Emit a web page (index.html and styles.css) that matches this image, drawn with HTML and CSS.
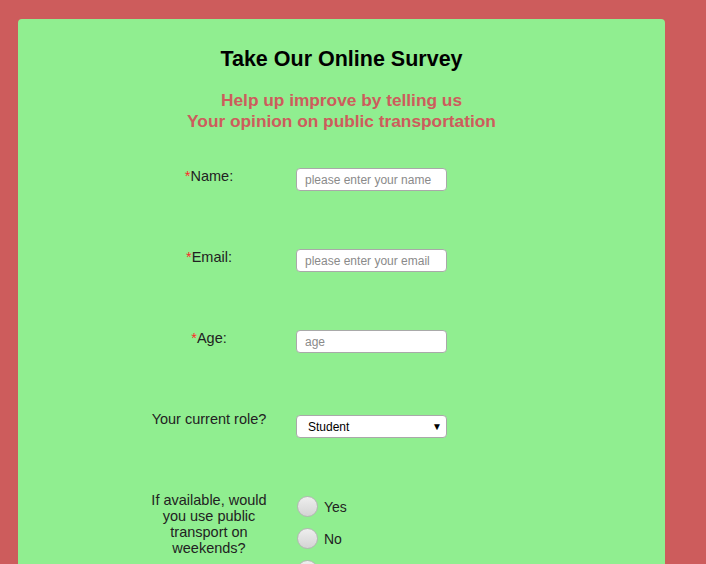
FILE: index.html
```html
<!DOCTYPE html>
<html>
<head>
<meta charset="utf-8">
<link rel="stylesheet" href="styles.css">
</head>
<body>
<div class="card">
  <h1 class="title">Take Our Online Survey</h1>
  <p class="subtitle">Help up improve by telling us<br>Your opinion on public transportation</p>
  <form class="form">
    <div class="row">
      <label class="lbl"><span class="req">*</span>Name:</label>
      <div class="field"><input class="inp" type="text" placeholder="please enter your name"></div>
    </div>
    <div class="row">
      <label class="lbl"><span class="req">*</span>Email:</label>
      <div class="field"><input class="inp" type="email" placeholder="please enter your email"></div>
    </div>
    <div class="row">
      <label class="lbl"><span class="req">*</span>Age:</label>
      <div class="field"><input class="inp" type="number" placeholder="age"></div>
    </div>
    <div class="row">
      <label class="lbl">Your current role?</label>
      <div class="field field-sel">
        <div class="sel"><span>Student</span><span class="arrow">&#9660;</span></div>
      </div>
    </div>
    <div class="row row-radio">
      <label class="lbl lbl-multi">If available, would you use public transport on weekends?</label>
      <div class="field radios">
        <label class="opt"><span class="radio"></span>Yes</label>
        <label class="opt"><span class="radio"></span>No</label>
        <label class="opt"><span class="radio"></span>Maybe</label>
      </div>
    </div>
  </form>
</div>
</body>
</html>
```
FILE: styles.css
```css
html, body {
  margin: 0;
  padding: 0;
  background: #cd5c5c;
  font-family: "Liberation Sans", Arial, sans-serif;
  overflow: hidden;
  height: 564px;
}
body {
  padding: 19px 41px 0 18px;
}
.card {
  background: #90ee90;
  border-radius: 4px;
  padding-top: 27px;
  padding-bottom: 40px;
  min-height: 700px;
}
.title {
  margin: 0;
  text-align: center;
  font-size: 21.5px;
  line-height: 26px;
  font-weight: bold;
  color: #000;
}
.subtitle {
  margin: 18px 0 0;
  text-align: center;
  font-size: 17.3px;
  line-height: 21px;
  font-weight: bold;
  color: #cd5c5c;
}
.form {
  margin-top: 36px;
  display: flex;
  flex-direction: column;
  gap: 58px;
}
.row {
  display: flex;
  align-items: flex-start;
  padding-left: 132px;
}
.row-radio { margin-top: -4px; }
.lbl {
  width: 118px;
  text-align: center;
  font-size: 14.5px;
  line-height: 17px;
  color: #222;
  margin-right: 28px;
}
.req { color: #ff2a2a; }
.lbl-multi { line-height: 16px; }
.field { display: flex; flex-direction: column; }
.inp {
  box-sizing: border-box;
  width: 151px;
  height: 23px;
  margin: 0;
  border: 1px solid #a9a9a9;
  border-radius: 4px;
  background: #fff;
  padding: 0 8px;
  font-family: "Liberation Sans", Arial, sans-serif;
  font-size: 12px;
  color: #333;
  outline: none;
}
.inp::placeholder { color: #8a8a8a; }
.inp::-webkit-outer-spin-button, .inp::-webkit-inner-spin-button { -webkit-appearance: none; margin: 0; }
.field-sel { padding-top: 4px; }
.sel {
  box-sizing: border-box;
  width: 151px;
  height: 23px;
  border: 1px solid #a9a9a9;
  border-radius: 4px;
  background: #fff;
  display: flex;
  align-items: center;
  justify-content: space-between;
  padding: 0 4px 0 11px;
  font-size: 12px;
  color: #000;
}
.arrow { font-size: 10px; }
.radios {
  padding-top: 4px;
  gap: 11px;
}
.opt {
  display: flex;
  align-items: center;
  gap: 6px;
  font-size: 14px;
  color: #222;
}
.radio {
  box-sizing: border-box;
  width: 21px;
  height: 21px;
  border-radius: 50%;
  border: 1px solid #b5b5b5;
  background: linear-gradient(#eeeeee, #d4d4d4);
  margin-left: 1px;
}
```
